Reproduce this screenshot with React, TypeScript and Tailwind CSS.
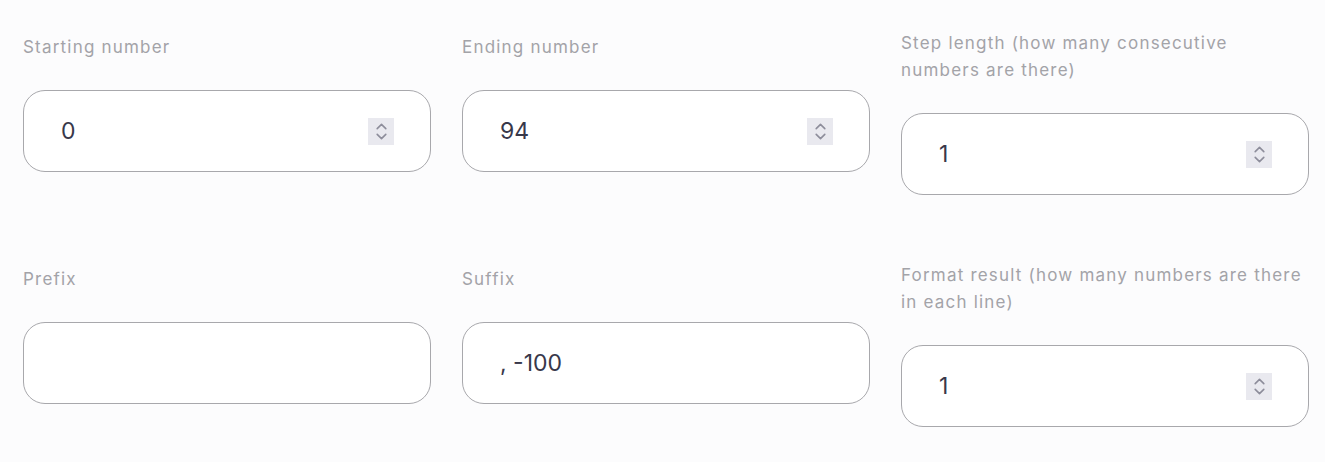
import React from "react";

type Field = { label: string[]; value: string; number: boolean };

const fields: Field[] = [
  { label: ["Starting number"], value: "0", number: true },
  { label: ["Ending number"], value: "94", number: true },
  { label: ["Step length (how many consecutive", "numbers are there)"], value: "1", number: true },
  { label: ["Prefix"], value: "", number: false },
  { label: ["Suffix"], value: ", -100", number: false },
  { label: ["Format result (how many numbers are there", "in each line)"], value: "1", number: true },
];

function Spinner() {
  return (
    <div className="w-[26px] h-[27px] bg-[#e9e9ef] flex flex-col items-center justify-center gap-[3px] shrink-0">
      <svg width="11" height="7" viewBox="0 0 11 7" fill="none">
        <path d="M1.2 5.6 L5.5 1.4 L9.8 5.6" stroke="#8d8d9b" strokeWidth="1.6" strokeLinecap="round" strokeLinejoin="round" />
      </svg>
      <svg width="11" height="7" viewBox="0 0 11 7" fill="none">
        <path d="M1.2 1.4 L5.5 5.6 L9.8 1.4" stroke="#8d8d9b" strokeWidth="1.6" strokeLinecap="round" strokeLinejoin="round" />
      </svg>
    </div>
  );
}

export default function App() {
  return (
    <div
      className="min-h-[462px] w-full bg-[#fcfcfd] pl-[23px] pr-[16px] pt-[30px]"
      style={{ fontFamily: "Inter, 'Noto Sans', sans-serif" }}
    >
      <div className="grid grid-cols-3 gap-x-[31px] gap-y-[67px]">
        {fields.map((f, i) => (
          <div key={i} className="flex flex-col">
            <div
              className={
                "text-[17px] leading-[27px] text-[#a3a3a8] tracking-[1.2px] whitespace-nowrap " +
                (f.label.length > 1 ? "" : "mt-[4px]")
              }
            >
              {f.label.map((line, j) => (
                <div key={j}>{line}</div>
              ))}
            </div>
            <div className="mt-[29px] h-[82px] rounded-[22px] border border-[#a8a8ac] bg-white flex items-center pl-[37px] pr-[36px]">
              <span className="flex-1 text-[23px] text-[#38384a] leading-none">{f.value}</span>
              {f.number && <Spinner />}
            </div>
          </div>
        ))}
      </div>
    </div>
  );
}
